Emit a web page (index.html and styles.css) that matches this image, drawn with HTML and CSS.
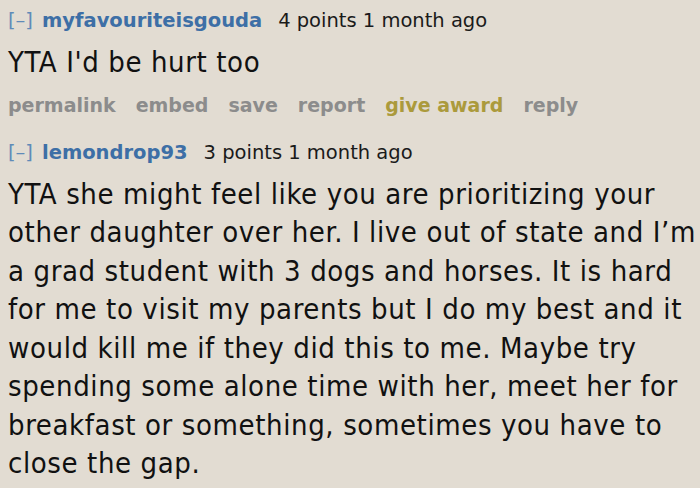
FILE: index.html
```html
<!DOCTYPE html>
<html>
<head>
<meta charset="utf-8">
<link rel="stylesheet" href="styles.css">
</head>
<body>
<div class="thread">
  <div class="comment">
    <div class="tagline">
      <span class="expand">[–]</span>
      <span class="author">myfavouriteisgouda</span>
      <span class="score">4 points 1 month ago</span>
    </div>
    <div class="body">YTA I'd be hurt too</div>
    <ul class="buttons">
      <li>permalink</li>
      <li>embed</li>
      <li>save</li>
      <li>report</li>
      <li class="award">give award</li>
      <li>reply</li>
    </ul>
  </div>
  <div class="comment second">
    <div class="tagline">
      <span class="expand">[–]</span>
      <span class="author">lemondrop93</span>
      <span class="score">3 points 1 month ago</span>
    </div>
    <div class="body">YTA she might feel like you are prioritizing your<br>other daughter over her. I live out of state and I’m<br>a grad student with 3 dogs and horses. It is hard<br>for me to visit my parents but I do my best and it<br>would kill me if they did this to me. Maybe try<br>spending some alone time with her, meet her for<br>breakfast or something, sometimes you have to<br>close the gap.</div>
  </div>
</div>
</body>
</html>
```
FILE: styles.css
```css
html, body {
  margin: 0;
  padding: 0;
  background: #e2dcd2;
}
.thread {
  padding: 9px 8px 0;
  color: #111;
}
.tagline {
  font-family: "DejaVu Sans", Verdana, sans-serif;
  font-size: 19.5px;
  line-height: 24px;
  display: flex;
  align-items: baseline;
  white-space: nowrap;
}
.expand {
  color: #5f8bb8;
  margin-right: 9px;
}
.author {
  color: #3d6fa6;
  font-weight: bold;
  margin-right: 16px;
}
.score {
  color: #1a1a1a;
}
.body {
  font-family: "DejaVu Sans Condensed", Tahoma, sans-serif;
  font-size: 29px;
  letter-spacing: 0.6px;
  line-height: 38.5px;
  margin-top: 10px;
  white-space: nowrap;
}
.buttons {
  list-style: none;
  margin: 11px 0 0;
  padding: 0;
  display: flex;
  gap: 20px;
  font-family: "DejaVu Sans", Verdana, sans-serif;
  font-size: 19px;
  font-weight: bold;
  color: #8c8c8c;
  line-height: 24px;
}
.award {
  color: #ab9a3c;
}
.second {
  margin-top: 24px;
}
```
